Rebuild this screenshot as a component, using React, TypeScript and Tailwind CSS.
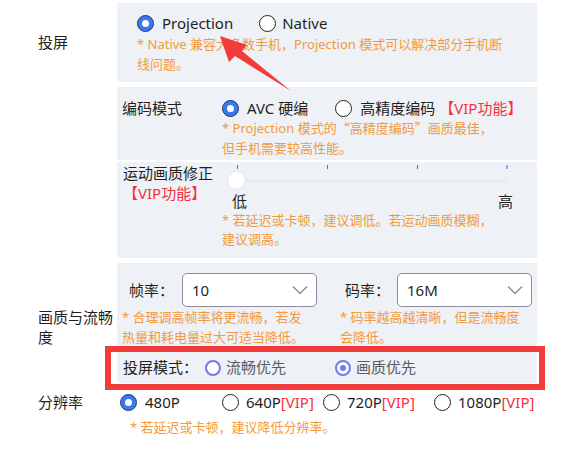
import React from 'react';

const Radio = ({ checked }: { checked?: boolean }) =>
  checked ? (
    <span className="flex h-[17px] w-[17px] shrink-0 items-center justify-center rounded-full border border-[#27396a] bg-[#3b78f0]">
      <span className="h-[7px] w-[7px] rounded-full bg-white" />
    </span>
  ) : (
    <span className="block h-[17px] w-[17px] shrink-0 rounded-full border border-[#222] bg-white" />
  );

const RingRadio = ({ checked }: { checked?: boolean }) => (
  <span className="flex h-[16px] w-[16px] shrink-0 items-center justify-center rounded-full border-2 border-[#6d7bef] bg-white">
    {checked && <span className="h-[6px] w-[6px] rounded-full bg-[#6d7bef]" />}
  </span>
);

const Note = ({ lines, className = '' }: { lines: React.ReactNode[]; className?: string }) => (
  <div className={`whitespace-nowrap text-[13px] leading-[20px] text-[#f39a3e] ${className}`}>
    {lines.map((l, i) => (
      <div key={i}>{l}</div>
    ))}
  </div>
);

const Select = ({ value }: { value: string }) => (
  <div className="flex h-[34px] w-[135px] items-center justify-between rounded-[5px] border border-[#8e8b9b] bg-white pl-[9px] pr-[8px] text-[15px]">
    <span>{value}</span>
    <svg width="16" height="10" viewBox="0 0 16 10" fill="none">
      <path d="M1 1.5 L8 8.5 L15 1.5" stroke="#8a8a90" strokeWidth="1.3" />
    </svg>
  </div>
);

const Vip = ({ text }: { text: string }) => <span className="text-[#f7303c]">{text}</span>;

const Q = ({ c }: { c: string }) => <span className="font-['Noto_Sans_CJK_SC',sans-serif]">{c}</span>;

export default function App() {
  return (
    <div className="relative h-[455px] w-[570px] overflow-hidden bg-white pt-[3px] font-['Noto_Sans','Noto_Sans_CJK_SC',sans-serif] text-[#1f1f1f]">
      {/* 投屏 */}
      <div className="flex">
        <div className="flex w-[117px] items-center pl-[38px] text-[15px]">投屏</div>
        <div className="w-[420px] bg-[#eef1f5] pb-[8px] pl-[20px] pt-[9px]">
          <div className="flex h-[22px] items-center text-[15px]">
            <Radio checked />
            <span className="ml-[8px]">Projection</span>
            <span className="ml-[26px]">
              <Radio />
            </span>
            <span className="ml-[6px]">Native</span>
          </div>
          <Note lines={['* Native 兼容大多数手机，Projection 模式可以解决部分手机断', '线问题。']} />
        </div>
      </div>

      {/* 编码 / 运动画质 */}
      <div className="mt-[5px] flex">
        <div className="w-[117px]" />
        <div className="w-[420px]">
          <div className="flex bg-[#eef1f5] pb-[2px] pt-[11px]">
            <div className="w-[105px] pl-[5px] text-[15px] leading-[20px]">编码模式</div>
            <div>
              <div className="flex h-[20px] items-center text-[15px]">
                <Radio checked />
                <span className="ml-[8px]">AVC 硬编</span>
                <span className="ml-[27px]">
                  <Radio />
                </span>
                <span className="ml-[8px]">高精度编码</span>
                <span className="ml-[4px]">
                  <Vip text="【VIP功能】" />
                </span>
              </div>
              <Note
                lines={[
                  <>
                    * Projection 模式的<Q c="“" />高精度编码<Q c="”" />画质最佳，
                  </>,
                  '但手机需要较高性能。',
                ]}
              />
            </div>
          </div>

          <div className="mt-[2px] flex bg-[#eef1f5] pb-[9px]">
            <div className="w-[105px] pl-[6px] pt-[1px] text-[15px] leading-[20px]">
              <div>运动画质修正</div>
              <Vip text="【VIP功能】" />
            </div>
            <div className="w-[300px]">
              <div className="relative h-[29px]">
                <span className="absolute left-[15px] top-[3px] h-[4px] w-[1px] bg-[#3a6cf3]" />
                <span className="absolute left-[105px] top-[3px] h-[4px] w-[1px] bg-[#3a6cf3]" />
                <span className="absolute left-[195px] top-[3px] h-[4px] w-[1px] bg-[#3a6cf3]" />
                <span className="absolute left-[284px] top-[3px] h-[4px] w-[2px] bg-[#8fa2f3]" />
                <span className="absolute left-[15px] top-[18px] h-[2px] w-[270px] bg-[#e6e8ec]" />
                <span className="absolute left-[6px] top-[10px] h-[17px] w-[17px] rounded-full bg-white shadow-[0_0_2px_rgba(0,0,0,0.12)]" />
              </div>
              <div className="flex h-[20px] w-[291px] items-center text-[15px]">
                <span className="ml-[10px]">低</span>
                <span className="ml-auto">高</span>
              </div>
              <div className="whitespace-nowrap text-[13px] leading-[19px] text-[#f39a3e]">
                <div>* 若延迟或卡顿，建议调低。若运动画质模糊，</div>
                <div>建议调高。</div>
              </div>
            </div>
          </div>
        </div>
      </div>

      {/* 画质与流畅度 */}
      <div className="mt-[5px] flex">
        <div className="flex w-[117px] items-center pl-[38px] pt-[8px] text-[15px] leading-[20px]">画质与流畅度</div>
        <div className="w-[420px]">
          <div className="flex bg-[#eef1f5] pl-[5px] pt-[10px]">
            <div className="w-[218px]">
              <div className="flex items-center text-[15px]">
                <span className="ml-[7px]">帧率：</span>
                <span className="ml-[8px]">
                  <Select value="10" />
                </span>
              </div>
              <Note lines={['* 合理调高帧率将更流畅，若发', '热量和耗电量过大可适当降低。']} />
            </div>
            <div>
              <div className="flex items-center text-[15px]">
                <span className="ml-[5px]">码率：</span>
                <span className="ml-[7px]">
                  <Select value="16M" />
                </span>
              </div>
              <Note lines={['* 码率越高越清晰，但是流畅度', '会降低。']} />
            </div>
          </div>
          <div className="mt-[5px] flex h-[31px] items-center bg-[#eef1f5] pl-[6px] text-[15px]">
            <span>投屏模式：</span>
            <span className="ml-[7px]">
              <RingRadio />
            </span>
            <span className="ml-[5px] text-[#5a5c63]">流畅优先</span>
            <span className="ml-[49px]">
              <RingRadio checked />
            </span>
            <span className="ml-[5px] text-[#5a5c63]">画质优先</span>
          </div>
        </div>
      </div>

      {/* 分辨率 */}
      <div className="mt-[8px] flex h-[22px] items-center text-[15px]">
        <div className="w-[117px] pl-[38px]">分辨率</div>
        <div className="ml-[3px] flex items-center">
          <div className="flex w-[102px] items-center">
            <Radio checked />
            <span className="ml-[8px]">480P</span>
          </div>
          <div className="flex w-[101px] items-center">
            <Radio />
            <span className="ml-[7px]">640P</span>
            <Vip text="[VIP]" />
          </div>
          <div className="flex w-[111px] items-center">
            <Radio />
            <span className="ml-[7px]">720P</span>
            <Vip text="[VIP]" />
          </div>
          <div className="flex items-center">
            <Radio />
            <span className="ml-[7px]">1080P</span>
            <Vip text="[VIP]" />
          </div>
        </div>
      </div>
      <Note className="mt-[4px] pl-[130px]" lines={['* 若延迟或卡顿，建议降低分辨率。']} />

      {/* annotations */}
      <div className="pointer-events-none absolute left-[105px] top-[346px] h-[44px] w-[440px] border-[6px] border-[#f23b3b]" />
      <svg className="pointer-events-none absolute left-0 top-0" width="570" height="455" viewBox="0 0 570 455">
        <polygon points="220,36 229,62 235,56 291,91 242,51 247,45" fill="#f23b3b" />
      </svg>
    </div>
  );
}
